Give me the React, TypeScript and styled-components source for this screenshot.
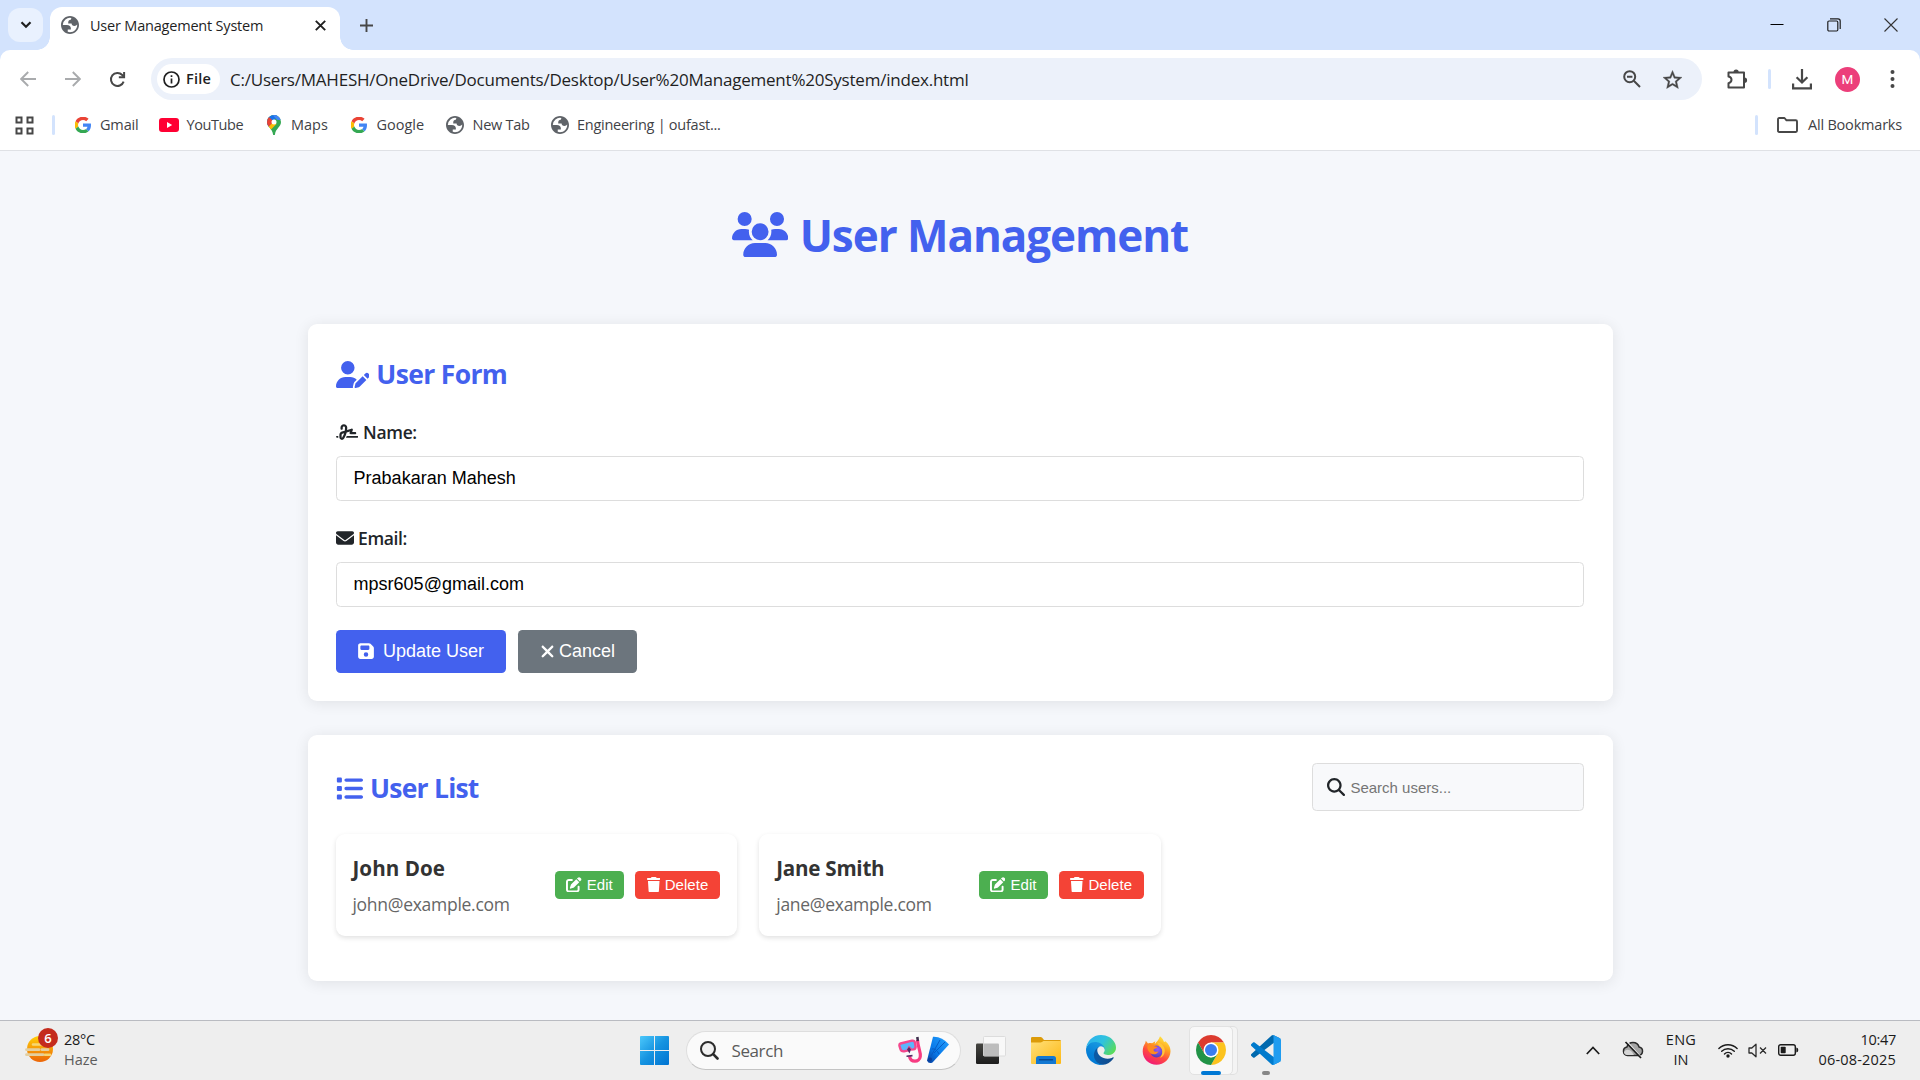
import React from 'react';
import styled, { createGlobalStyle } from 'styled-components';
import {
  FaUsers, FaUserPen, FaSignature, FaEnvelope, FaFloppyDisk, FaXmark,
  FaList, FaMagnifyingGlass, FaPenToSquare, FaTrash,
} from 'react-icons/fa6';

const GlobalStyle = createGlobalStyle`
  * { box-sizing: border-box; }
  body { margin: 0; overflow: hidden; }
  svg { display: block; flex: none; }
`;

const ui = `'Segoe UI', 'Open Sans', 'Noto Sans', sans-serif`;
const arial = `Arial, 'Liberation Sans', sans-serif`;

const Screen = styled.div`
  width: 1920px;
  height: 1080px;
  display: flex;
  flex-direction: column;
  background: #f5f7fb;
  font-family: ${ui};
  white-space: nowrap;
`;

/* ---------- shared ---------- */
const Label = styled.span<{ $size?: number; $ls?: number; $weight?: number; $color?: string }>`
  font-size: ${p => p.$size ?? 14.5}px;
  letter-spacing: ${p => p.$ls ?? 0}px;
  font-weight: ${p => p.$weight ?? 400};
  color: ${p => p.$color ?? '#3f4246'};
  line-height: 20px;
`;
const Glyph = styled.span<{ $w: number; $h: number; $gap?: number }>`
  display: inline-flex;
  flex: none;
  margin-right: ${p => p.$gap ?? 0}px;
  svg { width: ${p => p.$w}px; height: ${p => p.$h}px; }
`;

/* ---------- browser chrome ---------- */
const TabStrip = styled.div`
  height: 50px;
  flex: none;
  background: #d3e3fd;
  display: flex;
  padding-left: 8px;
`;
const TabSearch = styled.div`
  width: 35px;
  height: 34px;
  margin-top: 8px;
  border-radius: 12px;
  background: #e9f1fe;
  display: flex;
  align-items: center;
  justify-content: center;
`;
const Tab = styled.div`
  position: relative;
  width: 290px;
  margin: 7px 0 0 7px;
  padding: 0 14px 7px 11px;
  background: #fff;
  border-radius: 12px 12px 0 0;
  display: flex;
  align-items: center;
  &::before, &::after {
    content: '';
    position: absolute;
    bottom: 0;
    width: 13px;
    height: 13px;
  }
  &::before { left: -13px; background: radial-gradient(circle at 0 0, transparent 12.5px, #fff 13px); }
  &::after { right: -13px; background: radial-gradient(circle at 100% 0, transparent 12.5px, #fff 13px); }
`;
const TabTitle = styled(Label)`
  margin-left: 11px;
  padding-top: 1px;
  flex: 1;
`;
const NewTab = styled.div`
  margin: 19px 0 0 20px;
`;
const WindowButtons = styled.div`
  margin-left: auto;
  margin-right: 22px;
  height: 49px;
  display: flex;
  align-items: center;
  gap: 43px;
`;
const ToolbarBack = styled.div`
  background: #d3e3fd;
  flex: none;
`;
const Toolbar = styled.div`
  height: 50px;
  padding: 8px 22px 0 20px;
  background: #fff;
  border-radius: 10px 10px 0 0;
  display: flex;
  align-items: center;
`;
const Nav = styled.div`
  width: 131px;
  display: flex;
  gap: 28.5px;
`;
const Omnibox = styled.div`
  width: 1551px;
  height: 42px;
  padding: 0 20px 0 6px;
  border-radius: 21px;
  background: #ecf1fa;
  display: flex;
  align-items: center;
`;
const FileChip = styled.div`
  width: 63px;
  height: 30px;
  padding-left: 6px;
  margin-right: 10px;
  border-radius: 15px;
  background: #fff;
  display: flex;
  align-items: center;
  gap: 6px;
`;
const Url = styled(Label)`padding-top: 1px;`;
const OmniActions = styled.div`
  margin-left: auto;
  display: flex;
  align-items: center;
  gap: 22px;
`;
const Actions = styled.div`
  margin-left: 24.5px;
  display: flex;
  align-items: center;
`;
const Divider = styled.i`
  width: 3px;
  height: 20px;
  border-radius: 1.5px;
  background: #d3e3fd;
`;
const Avatar = styled.div`
  width: 25px;
  height: 25px;
  border-radius: 50%;
  background: #ec3f7a;
  color: #fff;
  font: 13.5px/25px Roboto, sans-serif;
  text-align: center;
`;
const Bookmarks = styled.div`
  height: 51px;
  flex: none;
  padding: 0 18px 0 15px;
  background: #fff;
  border-bottom: 1px solid #dfe1e5;
  display: flex;
  align-items: center;
`;
const Bookmark = styled.div<{ $w: number; $gap: number }>`
  width: ${p => p.$w}px;
  display: flex;
  align-items: center;
  gap: ${p => p.$gap}px;
`;
const AppsButton = styled.div`width: 37px;`;
const AllBookmarks = styled.div`
  margin-left: auto;
  display: flex;
  align-items: center;
  ${Divider} { margin-right: 19px; }
  ${Label} { margin-left: 10px; }
`;

/* ---------- page ---------- */
const Main = styled.main`
  flex: 1;
  width: 1305px;
  margin: 0 auto;
  color: #212529;
`;
const PageTitle = styled.h1`
  height: 173px;
  margin: 0;
  padding-bottom: 6px;
  display: flex;
  align-items: center;
  justify-content: center;
  color: #4361ee;
  font-size: 44px;
  font-weight: 700;
  letter-spacing: -1.05px;
  ${Glyph} { margin-top: -1px; }
`;
const Card = styled.section<{ $h: number }>`
  height: ${p => p.$h}px;
  margin-bottom: 34px;
  padding: 28px 28.1px;
  background: #fff;
  border-radius: 9px;
  box-shadow: 0 2px 15px rgba(0, 0, 0, 0.09);
`;
const SectionTitle = styled.h2<{ $ls: number; $h: number }>`
  height: ${p => p.$h}px;
  margin: 0;
  display: flex;
  align-items: center;
  color: #4361ee;
  font-size: 26.5px;
  font-weight: 700;
  letter-spacing: ${p => p.$ls}px;
`;
const Field = styled.label<{ $mt: number }>`
  display: block;
  margin-top: ${p => p.$mt}px;
`;
const Caption = styled.span<{ $ls: number }>`
  height: 28px;
  margin-bottom: 10px;
  display: flex;
  align-items: center;
  font-size: 17.5px;
  font-weight: 600;
  letter-spacing: ${p => p.$ls}px;
`;
const Input = styled.input`
  display: block;
  width: 100%;
  height: 45px;
  padding: 0 17px;
  border: 1px solid #ddd;
  border-radius: 4.5px;
  background: #fff;
  color: #000;
  font: 18px ${arial};
  outline: none;
`;
const Buttons = styled.div`
  margin-top: 23px;
  display: flex;
  gap: 12px;
`;
const Button = styled.button<{ $bg: string; $w: number }>`
  width: ${p => p.$w}px;
  height: 43px;
  padding: 0;
  border: 0;
  border-radius: 4.5px;
  background: ${p => p.$bg};
  color: #fff;
  font: 18px ${arial};
  display: flex;
  align-items: center;
  justify-content: center;
  ${Glyph} { margin-top: -1px; }
`;
const ListHead = styled.div`
  height: 48px;
  margin-bottom: 23px;
  display: flex;
  align-items: center;
  justify-content: space-between;
`;
const ListTitle = styled(SectionTitle)`padding-top: 2px;`;
const SearchBox = styled.div`
  width: 272.5px;
  height: 48px;
  padding-left: 14px;
  border: 1px solid #ddd;
  border-radius: 4.5px;
  background: #f8f9fb;
  display: flex;
  align-items: center;
`;
const SearchInput = styled.input`
  flex: 1;
  min-width: 0;
  padding: 0;
  border: 0;
  background: none;
  outline: none;
  font: 15px ${arial};
  &::placeholder { color: #757575; opacity: 1; }
`;
const Users = styled.div`
  display: grid;
  grid-template-columns: repeat(3, 1fr);
  gap: 22.5px;
`;
const User = styled.article`
  height: 102px;
  padding: 0 16.9px;
  border-radius: 9px;
  background: #fff;
  box-shadow: 0 2px 5px rgba(0, 0, 0, 0.12);
  display: flex;
  align-items: center;
  justify-content: space-between;
`;
const UserInfo = styled.div`padding-top: 2px;`;
const UserName = styled.h3<{ $ls: number }>`
  margin: 0 0 8px;
  color: #333;
  font-size: 20.6px;
  line-height: 28px;
  letter-spacing: ${p => p.$ls}px;
`;
const UserMail = styled.p`
  margin: 0;
  color: #666;
  font-size: 17.5px;
  line-height: 28px;
  letter-spacing: -0.28px;
`;
const UserActions = styled.div`
  display: flex;
  gap: 11px;
`;
const SmallButton = styled.button<{ $bg: string; $w: number }>`
  width: ${p => p.$w}px;
  height: 28px;
  padding: 0 0 1px;
  border: 0;
  border-radius: 4.5px;
  background: ${p => p.$bg};
  color: #fff;
  font: 15px ${arial};
  letter-spacing: 0.05px;
  display: flex;
  align-items: center;
  justify-content: center;
`;

/* ---------- taskbar ---------- */
const Taskbar = styled.footer`
  height: 60px;
  flex: none;
  padding-bottom: 1px;
  border-top: 1px solid #b9bbc1;
  background: #eee;
  display: flex;
  align-items: center;
`;
const Weather = styled.div`
  width: 640px;
  padding-left: 24px;
  display: flex;
  align-items: center;
`;
const WeatherIcon = styled.div`
  position: relative;
  width: 40px;
  height: 34px;
  margin-top: -3px;
`;
const Badge = styled.span`
  position: absolute;
  left: 14px;
  top: -4px;
  width: 20px;
  height: 20px;
  border-radius: 50%;
  background: #c42b1c;
  color: #fff;
  font-size: 13px;
  font-weight: 600;
  line-height: 20px;
  text-align: center;
`;
const Stack = styled.div<{ $align?: string; $w?: number }>`
  width: ${p => (p.$w ? p.$w + 'px' : 'auto')};
  display: flex;
  flex-direction: column;
  align-items: ${p => p.$align ?? 'flex-start'};
`;
const SearchPill = styled.div`
  width: 275px;
  height: 39px;
  margin: 0 15px 0 17px;
  padding: 0 10px 0 13px;
  border: 1px solid #dedede;
  border-bottom-color: #c4c4c4;
  border-radius: 20px;
  background: #fafafa;
  display: flex;
  align-items: center;
  ${Label} { flex: 1; margin-left: 12.5px; padding-top: 1px; }
`;
const TaskApp = styled.div<{ $ml: number; $w: number }>`
  position: relative;
  width: ${p => p.$w}px;
  height: 59px;
  margin-left: ${p => p.$ml}px;
  display: flex;
  align-items: center;
  justify-content: center;
`;
const ActiveTile = styled.div`
  width: 44px;
  height: 49px;
  border: 1px solid #e2e2e2;
  border-radius: 5px;
  background: #f8f8f8;
  box-shadow: 5px 0 0 -1px #f4f4f4, 5px 0 0 0 #e0e0e0;
  display: flex;
  align-items: center;
  justify-content: center;
`;
const Indicator = styled.i<{ $w: number; $c: string }>`
  position: absolute;
  bottom: 5px;
  left: 50%;
  width: ${p => p.$w}px;
  height: 4px;
  margin-left: ${p => -p.$w / 2}px;
  border-radius: 2px;
  background: ${p => p.$c};
`;
const Tray = styled.div`
  margin-left: auto;
  margin-right: 24px;
  display: flex;
  align-items: center;
`;

/* ---------- drawings ---------- */
const Globe = () => (
  <svg width="18" height="18" viewBox="2 2 20 20">
    <path fill="#5f6368" fillRule="evenodd" d="M12 2C6.48 2 2 6.48 2 12s4.48 10 10 10 10-4.48 10-10S17.52 2 12 2ZM4 12h4.4c3.407.022 4.922 1.73 4.543 5.127H9.488v2.47a8.004 8.004 0 0 0 10.498-8.083C19.327 12.504 18.332 13 17 13c-2.137 0-3.206-.916-3.206-2.75h-3.748c-.274-2.728.683-4.092 2.87-4.092 0-.975.327-1.597.811-1.97A8.004 8.004 0 0 0 4 12Z" />
  </svg>
);
const GoogleG = () => (
  <svg width="16" height="16" viewBox="1 1 46 46">
    <path fill="#EA4335" d="M24 9.5c3.54 0 6.71 1.22 9.21 3.6l6.85-6.85C35.9 2.38 30.47 0 24 0 14.62 0 6.51 5.38 2.56 13.22l7.98 6.19C12.43 13.72 17.74 9.5 24 9.5z" />
    <path fill="#4285F4" d="M46.98 24.55c0-1.57-.15-3.09-.38-4.55H24v9.02h12.94c-.58 2.96-2.26 5.48-4.78 7.18l7.73 6c4.51-4.18 7.09-10.36 7.09-17.65z" />
    <path fill="#FBBC05" d="M10.53 28.59c-.48-1.45-.76-2.99-.76-4.59s.27-3.14.76-4.59l-7.98-6.19C.92 16.46 0 20.12 0 24c0 3.88.92 7.54 2.56 10.78l7.97-6.19z" />
    <path fill="#34A853" d="M24 48c6.48 0 11.93-2.13 15.89-5.81l-7.73-6c-2.15 1.45-4.92 2.3-8.16 2.3-6.26 0-11.57-4.22-13.47-9.91l-7.98 6.19C6.51 42.62 14.62 48 24 48z" />
  </svg>
);
const YouTube = () => (
  <svg width="20" height="14" viewBox="0 0 20 14">
    <rect width="20" height="14" rx="3" fill="#ff0033" />
    <path d="M8 4l5.2 3L8 10z" fill="#fff" />
  </svg>
);
const MapsPin = () => (
  <svg width="14" height="20" viewBox="0 0 14 20">
    <clipPath id="pin"><path d="M7 0a7 7 0 0 1 7 7c0 5-5.300 6.500-6 12.200a1 1 0 0 1-2 0C5.300 13.500 0 12 0 7a7 7 0 0 1 7-7z" /></clipPath>
    <g clipPath="url(#pin)">
      <rect width="14" height="20" fill="#34a853" />
      <path d="M0 14L14-3H0z" fill="#1a73e8" />
      <path d="M5-1L14-1V5L10 5z" fill="#4285f4" />
      <path d="M-1 2L2 2 7 7-1 14z" fill="#ea4335" />
      <path d="M1 12.500L7 6l2.500 3L3.500 15z" fill="#fbbc04" />
    </g>
    <circle cx="7" cy="7" r="2.500" fill="#fff" />
  </svg>
);
const AppsGrid = () => (
  <svg width="19" height="19" viewBox="0 0 19 19" fill="none" stroke="#474747" strokeWidth="2">
    <path d="M1.500 1.500h5v5h-5zM12.500 1.500h5v5h-5zM1.500 12.500h5v5h-5zM12.500 12.500h5v5h-5z" />
  </svg>
);
const Arrow = ({ flip }: { flip?: boolean }) => (
  <svg width="16" height="16" viewBox="0 0 16 16" fill="none" stroke="#a9abad" strokeWidth="1.900">
    <path d={flip ? 'M0 8h14M7.800 1l7 7-7 7' : 'M16 8H2M8.200 1l-7 7 7 7'} />
  </svg>
);
const Reload = () => (
  <svg width="17" height="17" viewBox="0 0 18 18" fill="none" stroke="#474747" strokeWidth="2.100">
    <path d="M15.500 11.200A6.900 6.900 0 1 1 14 4.200l1.300 1.400" />
    <path d="M16 1v5.600h-5.600" />
  </svg>
);
const Info = () => (
  <svg width="17" height="17" viewBox="0 0 17 17" fill="none" stroke="#1f1f1f" strokeWidth="1.700">
    <circle cx="8.500" cy="8.500" r="7.500" />
    <path d="M8.500 7.600v5M8.500 4.300v1.800" />
  </svg>
);
const ZoomOut = () => (
  <svg width="18" height="18" viewBox="0 0 18 18" fill="none" stroke="#474747" strokeWidth="2">
    <circle cx="6.700" cy="6.700" r="5.500" />
    <path d="M10.800 10.800l6.200 6.200M4 6.700h5.400" />
  </svg>
);
const Star = () => (
  <svg width="19" height="19" viewBox="2 1.500 20 20">
    <path fill="#474747" stroke="#474747" strokeWidth=".4" d="M22 9.240l-7.190-.62L12 2 9.190 8.630 2 9.240l5.460 4.730L5.820 21 12 17.270 18.180 21l-1.630-7.030L22 9.240zM12 15.400l-3.760 2.270 1-4.280-3.320-2.880 4.380-.38L12 6.100l1.710 4.040 4.380.38-3.320 2.880 1 4.280L12 15.400z" />
  </svg>
);
const Puzzle = () => (
  <svg width="21" height="21" viewBox="0 0 21 21">
    <path fill="none" stroke="#474747" strokeWidth="2" strokeLinejoin="round" d="M1.500 3.500h15.500v15H1.500v-4.300c4-1 4-5.700 0-6.700z" />
    <path fill="#474747" d="M6.500 3a2.600 2.600 0 0 1 5.200 0zM17.500 8.600a2.600 2.600 0 0 1 0 5.200z" />
  </svg>
);
const Download = () => (
  <svg width="20" height="21" viewBox="0 0 20 21" fill="none" stroke="#474747" strokeWidth="2.200">
    <path d="M10 0v13M4.600 8.200l5.400 5.300 5.400-5.300M1.100 14.500v4.900h17.800v-4.900" />
  </svg>
);
const Dots = () => (
  <svg width="5" height="18" viewBox="0 0 5 18" fill="#474747">
    <circle cx="2.500" cy="2" r="2" /><circle cx="2.500" cy="9" r="2" /><circle cx="2.500" cy="16" r="2" />
  </svg>
);
const Folder = () => (
  <svg width="21" height="16" viewBox="0 0 21 16" fill="none" stroke="#474747" strokeWidth="1.900" strokeLinejoin="round">
    <path d="M1 2.200Q1 1 2.200 1H7.500l2 2.300h9.300q1.200 0 1.200 1.200v9.300q0 1.200-1.200 1.200H2.200Q1 15 1 13.800z" />
  </svg>
);

const WindowsLogo = () => (
  <svg width="29" height="29" viewBox="0 0 29 29">
    <defs><linearGradient id="win" gradientUnits="userSpaceOnUse" x1="0" y1="0" x2="29" y2="29"><stop stopColor="#4cc8fb" /><stop offset=".5" stopColor="#1593e0" /><stop offset="1" stopColor="#0073d1" /></linearGradient></defs>
    <path fill="url(#win)" d="M1 0h13v14H0V1q0-1 1-1zM15 0h13q1 0 1 1v13H15zM0 15h14v14H1q-1 0-1-1zM15 15h14v13q0 1-1 1H15z" />
  </svg>
);
const TaskSearch = () => (
  <svg width="19" height="19" viewBox="0 0 19 19" fill="none" stroke="#2b2b2b" strokeLinecap="round">
    <circle cx="8" cy="8" r="7" strokeWidth="2" fill="#f1f1f1" />
    <path d="M13.200 13.200l4.300 4.300" strokeWidth="2.600" />
  </svg>
);
const Snorkel = () => (
  <svg width="52" height="28" viewBox="0 0 52 28">
    <defs><linearGradient id="fin" x1="1" y1="0" x2="0" y2="1"><stop stopColor="#25a2ff" /><stop offset=".6" stopColor="#0878e8" /><stop offset="1" stopColor="#073f9e" /></linearGradient></defs>
    <path d="M19.500 4C20 12 23 16 22.300 20.500c-.8 6-9.800 6.400-10.800-.3" fill="none" stroke="#f73c82" strokeWidth="3.200" />
    <path d="M18 1.300l2.600-.6.500 4-2.400.5z" fill="#40304e" />
    <path d="M2.500 7.500L14 4.700q2.500-.4 3 2.200l.6 3.500q.3 2.600-2.200 3l-2.200.2-2.100-2-1.300 2.800-3.700.9Q3.200 15.600 2.400 13L1.500 10q-.4-2 1-2.500z" fill="#5ab5fb" stroke="#f4478d" strokeWidth="2.400" />
    <path d="M9 13.500l2-2.500 2 2.500-1.500 4zM8.500 19.500l6-.8v1.800l-6 .5z" fill="#552b66" />
    <path d="M35 .8q9-.5 16 7.700L34.500 26.500q-4 1.800-5.500-2z" fill="url(#fin)" />
    <path d="M34 13q4-1 7 5M33 20L42 4M36 17L47 6" fill="none" stroke="#075bc4" strokeWidth="1" />
    <circle cx="32" cy="23.500" r="2" fill="#0a3f9a" />
  </svg>
);
const TaskView = () => (
  <svg width="30" height="28" viewBox="0 0 30 28">
    <defs><linearGradient id="tv" x1="0" y1="0" x2="0" y2="1"><stop stopColor="#454541" /><stop offset="1" stopColor="#1c1c1c" /></linearGradient></defs>
    <rect y="7.500" width="23" height="20.500" rx="1.200" fill="url(#tv)" />
    <rect x="7.500" y=".5" width="22" height="19.500" rx="1" fill="#f8f8f8" stroke="#dcdcdc" />
    <path d="M7.500 7.500H22q1 0 1 1V20H8q-.5 0-.5-.5z" fill="#bdbdbd" />
  </svg>
);
const Explorer = () => (
  <svg width="30" height="27" viewBox="0 0 30 27">
    <defs><linearGradient id="fe" x1="0" y1="0" x2="1" y2="1"><stop stopColor="#ffe07a" /><stop offset="1" stopColor="#fdb813" /></linearGradient></defs>
    <path d="M1.200 0h8.300q1 0 1.700.8L13 3h15.800Q30 3 30 4.200V10H0V1.200Q0 0 1.200 0z" fill="#dc9b09" />
    <path d="M0 5.500h9.500q1 0 1.800-.7L12.500 4H30v22q0 1-1 1H1q-1 0-1-1z" fill="url(#fe)" />
    <path d="M5 27v-5.500Q5 19 7.500 19h15q2.500 0 2.500 2.500V27z" fill="#1278d2" />
    <path d="M8.500 22.700h13" stroke="#094a92" strokeWidth="1.400" strokeLinecap="round" />
  </svg>
);
const Edge = () => (
  <svg width="30" height="30" viewBox="0 0 256 256">
    <defs>
      <linearGradient id="e1" x1=".2" y1=".5" x2="1" y2=".7"><stop stopColor="#0c59a4" /><stop offset="1" stopColor="#114a8b" /></linearGradient>
      <linearGradient id="e2" x1=".7" y1="0" x2=".3" y2="1"><stop stopColor="#1b9de2" /><stop offset=".6" stopColor="#0680d7" /><stop offset="1" stopColor="#0078d4" /></linearGradient>
      <linearGradient id="e3" x1="0" y1=".2" x2="1" y2=".7"><stop stopColor="#2bb0ee" /><stop offset=".5" stopColor="#2fc2df" /><stop offset="1" stopColor="#5bdc58" /></linearGradient>
    </defs>
    <g transform="translate(-4.630 -4.920)">
      <path fill="url(#e1)" d="M235.680 195.460a93.730 93.730 0 0 1-10.540 4.710 101.870 101.870 0 0 1-35.900 6.460c-47.320 0-88.540-32.550-88.540-74.320A31.480 31.480 0 0 1 117.130 104.800c-42.800 1.800-53.800 46.400-53.800 72.530 0 73.880 68.090 81.370 82.760 81.370 7.910 0 19.840-2.300 27-4.560l1.310-.44a128.340 128.340 0 0 0 66.600-52.800 4 4 0 0 0-5.320-5.440z" />
      <path fill="url(#e2)" d="M110.340 246.340A79.200 79.200 0 0 1 87.600 225a80.720 80.720 0 0 1 29.530-120c3.120-1.470 8.450-4.130 15.540-4a32.350 32.350 0 0 1 25.690 13 31.880 31.880 0 0 1 6.360 18.660c0-.21 24.460-79.600-80-79.600-43.900 0-80 41.660-80 78.210a130.150 130.150 0 0 0 12.110 56 128 128 0 0 0 156.380 67.110 75.550 75.550 0 0 1-62.780-8z" />
      <path fill="url(#e3)" d="M156.940 153.780c-.81 1.050-3.300 2.500-3.300 5.660 0 2.610 1.700 5.120 4.720 7.230 14.380 10 41.490 8.680 41.560 8.680a59.560 59.560 0 0 0 30.270-8.350A61.380 61.380 0 0 0 260.620 114.100c.26-22.410-8-37.310-11.340-43.910C228.090 28.760 182.350 4.920 132.610 4.920a128 128 0 0 0-128 126.200c.48-36.540 36.800-66.050 80-66.050 3.500 0 23.460.34 42 10.070 16.340 8.580 24.900 18.940 30.850 29.210 6.180 10.670 7.280 24.150 7.280 29.520s-2.740 13.330-7.800 19.910z" />
    </g>
  </svg>
);
const Firefox = () => (
  <svg width="29" height="29" viewBox="0 0 29 29">
    <defs>
      <linearGradient id="ff" x1=".8" y1="0" x2=".3" y2="1"><stop stopColor="#fff04a" /><stop offset=".35" stopColor="#ffa51f" /><stop offset=".65" stopColor="#ff4a3f" /><stop offset="1" stopColor="#f0187a" /></linearGradient>
      <radialGradient id="fp" cx=".6" cy=".3" r=".7"><stop stopColor="#9b5cf5" /><stop offset="1" stopColor="#4e3fc0" /></radialGradient>
    </defs>
    <path fill="url(#ff)" d="M18 .3c2 1.500 3.200 3.500 4 5.600 1-.1 1.400-.7 1.400-.7 3 2.300 5.300 6 5.100 10.300C28.200 23 22 28.700 14.500 28.700S.8 23 .7 15.500C.6 12 2 8.600 3.200 7.200l.6-2.400L6 7.400c1.500-.5 2.700-.5 4-.2l3.300-2-.6 3C14.500 6 16.500 4.500 18 .3z" />
    <circle cx="14.500" cy="15.500" r="6" fill="url(#fp)" />
    <path fill="#ff8a20" d="M5.500 9.500c3-1.800 5.300-.5 7 .8l3 .6c-.5 1.600-3.700 1.600-4 3 .3 2 3 2.500 5 1.300-1 2.900-4.500 4-7.300 2.500C6 16 4.800 12.500 5.500 9.500z" />
    <path fill="#ffc53a" d="M15 6.500c4.500.2 8 4 7.800 8.500-.2 3.800-2.200 6-4.800 7 3-3.500 3.400-9-.5-11.500z" />
  </svg>
);
const ChromeLogo = () => (
  <svg width="30" height="30" viewBox="0 0 48 48">
    <path fill="#dc3b2f" d="M3.220 12A24 24 0 0 1 44.780 12H24L13.610 30z" />
    <path fill="#fcc31e" d="M44.780 12A24 24 0 0 1 24 48L34.390 30 34.400 18 24 12z" />
    <path fill="#229347" d="M24 48A24 24 0 0 1 3.220 12L13.610 30 24 36l10.390-6z" />
    <circle cx="24" cy="24" r="12" fill="#fff" />
    <circle cx="24" cy="24" r="9.600" fill="#3a7df0" />
  </svg>
);
const VsCode = () => (
  <svg width="30" height="30" viewBox="0 0 100 100">
    <path fill="#0069ae" d="M96.460 10.800L75.860.88c-2.390-1.150-5.240-.67-7.110 1.200L1.300 63.580c-1.810 1.660-1.810 4.510 0 6.170l5.510 5c1.490 1.350 3.720 1.450 5.320.24L93.360 13.370C96.090 11.300 100 13.250 100 16.670c0-2.640-1.380-4.830-3.540-5.870z" />
    <path fill="#007acc" d="M96.460 89.200l-20.600 9.920c-2.390 1.150-5.240.67-7.110-1.200L1.300 36.420c-1.810-1.660-1.810-4.510 0-6.170l5.510-5c1.490-1.350 3.720-1.450 5.320-.24L93.360 86.630c2.730 2.070 6.640.12 6.640-3.300 0 2.640-1.380 4.830-3.540 5.870z" />
    <path fill="#1f9cf0" d="M75.860 99.130c-2.390 1.140-5.240.66-7.110-1.210 2.310 2.300 6.250.67 6.250-2.590V4.670c0-3.260-3.940-4.890-6.250-2.590C70.620.21 73.470-.27 75.860.87l20.600 9.910c2.160 1.040 3.540 3.230 3.540 5.630v67.180c0 2.400-1.380 4.590-3.540 5.630z" />
  </svg>
);
const Haze = () => (
  <svg width="30" height="34" viewBox="0 0 30 34">
    <defs><linearGradient id="sun" x1="0" y1="0" x2="0" y2="1"><stop stopColor="#ffcf08" /><stop offset="1" stopColor="#ec6508" /></linearGradient></defs>
    <circle cx="16" cy="17" r="13" fill="url(#sun)" />
    <path d="M2.500 17.700H15M2.500 22.700H19M18 17.700h6" stroke="#e3cfa0" strokeWidth="2.800" strokeLinecap="round" />
    <path d="M9 12.500h10M21 22.700h5" stroke="#f6d774" strokeWidth="2.600" strokeLinecap="round" />
  </svg>
);
const CloudOff = () => (
  <svg width="22" height="18" viewBox="0 0 22 18">
    <path d="M5.500 14.500a4.300 4.300 0 0 1-.6-8.500 6.400 6.400 0 0 1 12.200 0 4.300 4.300 0 0 1-.6 8.500z" fill="#a5a5a5" stroke="#2b2b2b" strokeWidth="1.500" />
    <path d="M2 11c2-3 5-3 8 0l2 3H5q-3-.5-3-3z" fill="#d5d5d5" />
    <path d="M5.300 1l14 15.500" stroke="#eee" strokeWidth="1.400" />
    <path d="M3.500 1l15.500 16" stroke="#1b1b1b" strokeWidth="1.700" />
  </svg>
);
const Wifi = () => (
  <svg width="20" height="15" viewBox="0 0 20 15" fill="none" stroke="#1b1b1b" strokeWidth="1.400" strokeLinecap="round">
    <path d="M.9 5.500a12.900 12.900 0 0 1 18.200 0M3.700 8.300a8.900 8.900 0 0 1 12.600 0M6.500 11a5 5 0 0 1 7 0" />
    <circle cx="10" cy="13" r="1.700" fill="#1b1b1b" stroke="none" />
  </svg>
);
const Muted = () => (
  <svg width="20" height="15" viewBox="0 0 20 15" fill="none" stroke="#2b2b2b" strokeWidth="1.300" strokeLinejoin="round">
    <path d="M1 5h2.800L8 1.200v12.600L3.800 10H1zM12 4.500l6 6M18 4.500l-6 6" />
  </svg>
);
const Battery = () => (
  <svg width="21" height="12" viewBox="0 0 21 12">
    <rect x=".7" y=".7" width="16.600" height="10.600" rx="2" fill="none" stroke="#1b1b1b" strokeWidth="1.400" />
    <rect x="2.700" y="2.700" width="5" height="6.600" rx=".8" fill="#1b1b1b" />
    <path d="M18.300 3.500q2 .3 2 2.500t-2 2.500z" fill="#1b1b1b" />
  </svg>
);

const users = [
  { name: 'John Doe', mail: 'john@example.com', ls: 0.05 },
  { name: 'Jane Smith', mail: 'jane@example.com', ls: -0.25 },
];

const Space = styled.i<{ $w: number }>`width: ${p => p.$w}px; flex: none;`;

export default function App() {
  return (
    <Screen>
      <GlobalStyle />
      <TabStrip>
        <TabSearch>
          <svg width="12" height="8" viewBox="0 0 12 8" fill="none" stroke="#1f1f1f" strokeWidth="2.200"><path d="M1.500 1.200L6 5.700l4.500-4.500" /></svg>
        </TabSearch>
        <Tab>
          <Globe />
          <TabTitle $ls={-0.2} $color="#1f1f1f">User Management System</TabTitle>
          <svg width="11" height="11" viewBox="0 0 11 11" stroke="#1f1f1f" strokeWidth="1.900"><path d="M.8.8l9.400 9.400M10.200.8L.8 10.200" /></svg>
        </Tab>
        <NewTab>
          <svg width="13" height="13" viewBox="0 0 13 13" stroke="#474747" strokeWidth="1.900"><path d="M6.500 0v13M0 6.500h13" /></svg>
        </NewTab>
        <WindowButtons>
          <svg width="14" height="14" viewBox="0 0 14 14" stroke="#000"><path d="M.5 6.500h13" /></svg>
          <svg width="14" height="14" viewBox="0 0 14 14" fill="none" stroke="#1f1f1f" strokeWidth="1.200"><rect x=".8" y="3" width="10" height="10" rx="1.200" /><path d="M3 .8h8q2.200 0 2.200 2.200v8" /></svg>
          <svg width="14" height="14" viewBox="0 0 14 14" stroke="#333" strokeWidth="1.100"><path d="M.5.5l13 13M13.500.5l-13 13" /></svg>
        </WindowButtons>
      </TabStrip>

      <ToolbarBack>
        <Toolbar>
          <Nav><Arrow /><Arrow flip /><Reload /></Nav>
          <Omnibox>
            <FileChip><Info /><Label $ls={0.2} $weight={600} $color="#1f1f1f">File</Label></FileChip>
            <Url $size={17} $ls={-0.22} $color="#1f1f1f">C:/Users/MAHESH/OneDrive/Documents/Desktop/User%20Management%20System/index.html</Url>
            <OmniActions><ZoomOut /><Star /></OmniActions>
          </Omnibox>
          <Actions>
            <Puzzle /><Space $w={20} /><Divider /><Space $w={21.5} /><Download />
            <Space $w={23} /><Avatar>M</Avatar><Space $w={30} /><Dots />
          </Actions>
        </Toolbar>
      </ToolbarBack>

      <Bookmarks>
        <AppsButton><AppsGrid /></AppsButton>
        <Divider />
        <Space $w={20} />
        <Bookmark $w={84} $gap={9}><GoogleG /><Label $ls={-0.17}>Gmail</Label></Bookmark>
        <Bookmark $w={108} $gap={7.5}><YouTube /><Label $ls={-0.41}>YouTube</Label></Bookmark>
        <Bookmark $w={84} $gap={10}><MapsPin /><Label>Maps</Label></Bookmark>
        <Bookmark $w={95} $gap={9.5}><GoogleG /><Label>Google</Label></Bookmark>
        <Bookmark $w={105} $gap={8.5}><Globe /><Label $ls={-0.27}>New Tab</Label></Bookmark>
        <Bookmark $w={180} $gap={8}><Globe /><Label $ls={-0.26}>Engineering | oufast...</Label></Bookmark>
        <AllBookmarks><Divider /><Folder /><Label $ls={-0.2}>All Bookmarks</Label></AllBookmarks>
      </Bookmarks>

      <Main>
        <PageTitle><Glyph $w={56.25} $h={45} $gap={11.5}><FaUsers /></Glyph>User Management</PageTitle>
        <Card $h={377}>
          <SectionTitle $ls={-0.66} $h={44}><Glyph $w={33.75} $h={27} $gap={7}><FaUserPen /></Glyph>User Form</SectionTitle>
          <Field $mt={22}>
            <Caption $ls={-0.34}><Glyph $w={22.5} $h={18} $gap={5}><FaSignature /></Glyph>Name:</Caption>
            <Input readOnly value="Prabakaran Mahesh" />
          </Field>
          <Field $mt={23}>
            <Caption $ls={-0.37}><Glyph $w={18} $h={18} $gap={4.5}><FaEnvelope /></Glyph>Email:</Caption>
            <Input readOnly value="mpsr605@gmail.com" />
          </Field>
          <Buttons>
            <Button $bg="#4361ee" $w={170}><Glyph $w={18} $h={18} $gap={8}><FaFloppyDisk /></Glyph>Update User</Button>
            <Button $bg="#6c757d" $w={119}><Glyph $w={17} $h={19} $gap={3}><FaXmark /></Glyph>Cancel</Button>
          </Buttons>
        </Card>
        <Card $h={246}>
          <ListHead>
            <ListTitle $ls={-0.78} $h={48}><Glyph $w={27} $h={27} $gap={7.5}><FaList /></Glyph>User List</ListTitle>
            <SearchBox><Glyph $w={18} $h={18} $gap={5.5}><FaMagnifyingGlass /></Glyph><SearchInput placeholder="Search users..." /></SearchBox>
          </ListHead>
          <Users>
            {users.map(u => (
              <User key={u.mail}>
                <UserInfo>
                  <UserName $ls={u.ls}>{u.name}</UserName>
                  <UserMail>{u.mail}</UserMail>
                </UserInfo>
                <UserActions>
                  <SmallButton $bg="#4caf50" $w={69}><Glyph $w={15.5} $h={15.5} $gap={5}><FaPenToSquare /></Glyph>Edit</SmallButton>
                  <SmallButton $bg="#f44336" $w={85}><Glyph $w={13.5} $h={15.5} $gap={4.5}><FaTrash /></Glyph>Delete</SmallButton>
                </UserActions>
              </User>
            ))}
          </Users>
        </Card>
      </Main>

      <Taskbar>
        <Weather>
          <WeatherIcon><Haze /><Badge>6</Badge></WeatherIcon>
          <Stack><Label $ls={-0.26} $color="#1b1b1b">28°C</Label><Label $color="#5c5c5c">Haze</Label></Stack>
        </Weather>
        <WindowsLogo />
        <SearchPill><TaskSearch /><Label $size={17} $ls={-0.4} $color="#5a5a5a">Search</Label><Snorkel /></SearchPill>
        <TaskView />
        <TaskApp $ml={25} $w={30}><Explorer /></TaskApp>
        <TaskApp $ml={25} $w={30}><Edge /></TaskApp>
        <TaskApp $ml={25} $w={30}><Firefox /></TaskApp>
        <TaskApp $ml={18} $w={44}><ActiveTile><ChromeLogo /></ActiveTile><Indicator $w={20} $c="#0078d4" /></TaskApp>
        <TaskApp $ml={18} $w={30}><VsCode /><Indicator $w={8} $c="#868686" /></TaskApp>
        <Tray>
          <svg width="14" height="9" viewBox="0 0 14 9" fill="none" stroke="#1b1b1b" strokeWidth="1.700"><path d="M.8 8L7 1.500 13.200 8" /></svg>
          <Space $w={22} />
          <CloudOff />
          <Space $w={22} />
          <Stack $align="center" $w={30}><Label $ls={0.26} $color="#1b1b1b">ENG</Label><Label $color="#1b1b1b">IN</Label></Stack>
          <Space $w={22} />
          <Wifi /><Space $w={9.5} /><Muted /><Space $w={10} /><Battery />
          <Space $w={19.5} />
          <Stack $align="flex-end" $w={78}><Label $ls={-0.3} $color="#1b1b1b">10:47</Label><Label $ls={0.18} $color="#1b1b1b">06-08-2025</Label></Stack>
        </Tray>
      </Taskbar>
    </Screen>
  );
}
